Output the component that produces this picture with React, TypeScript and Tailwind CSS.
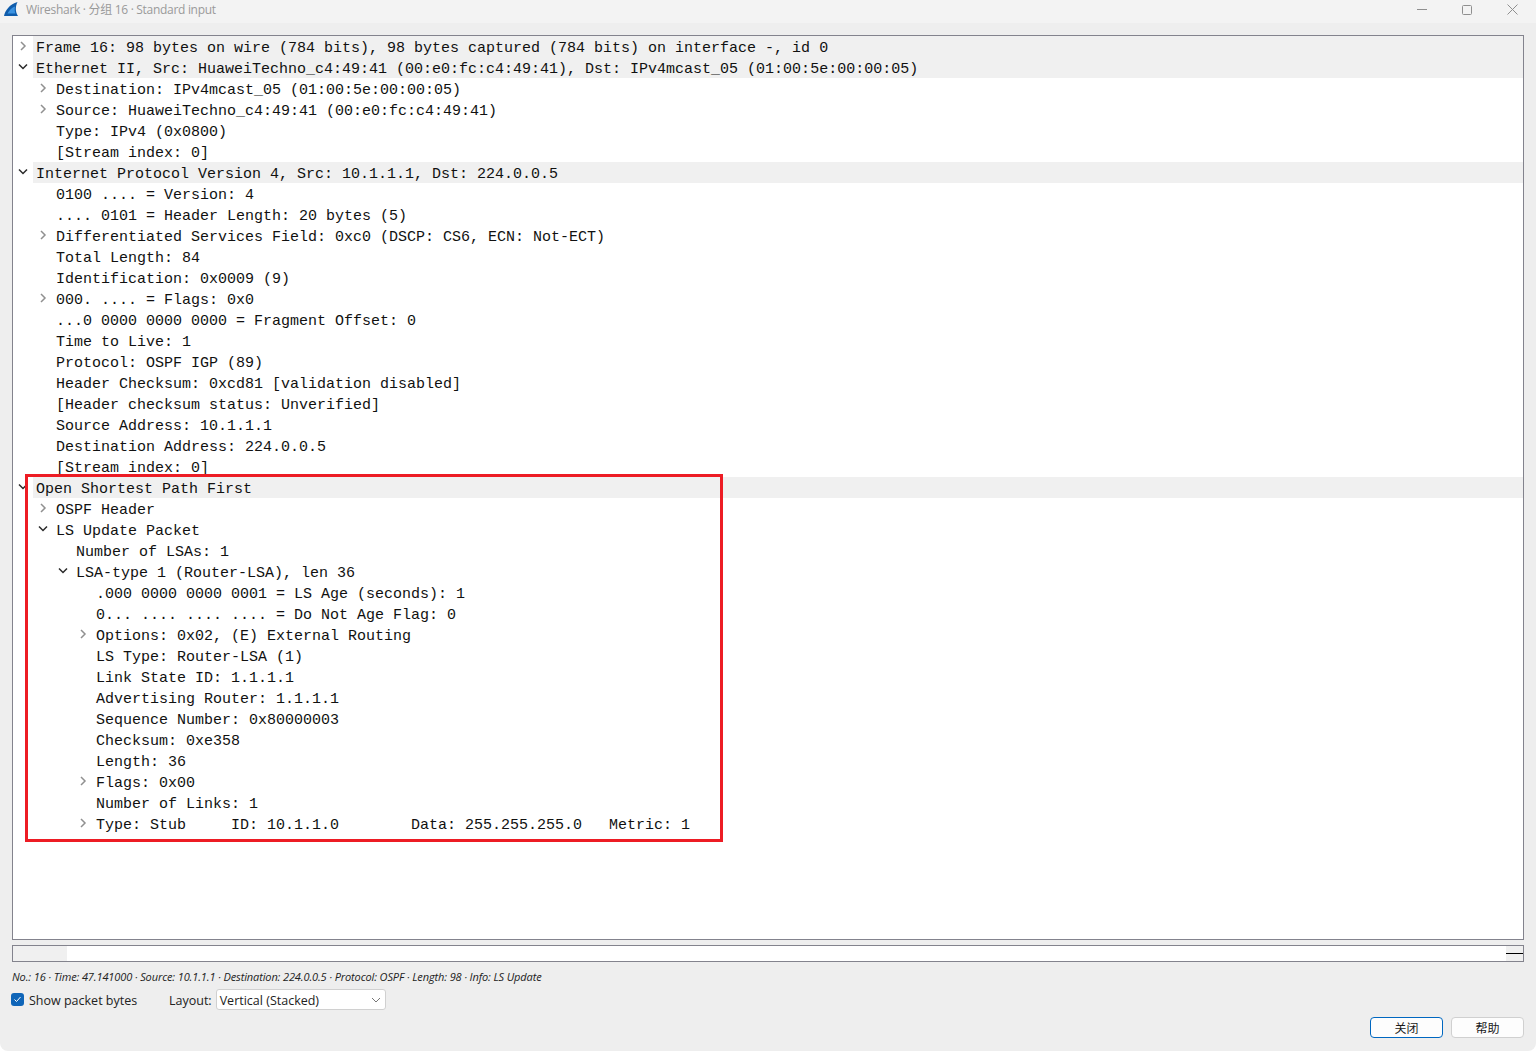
const rows: [number, "o" | "c" | null, string][] = [
  [0, "c", "Frame 16: 98 bytes on wire (784 bits), 98 bytes captured (784 bits) on interface -, id 0"],
  [0, "o", "Ethernet II, Src: HuaweiTechno_c4:49:41 (00:e0:fc:c4:49:41), Dst: IPv4mcast_05 (01:00:5e:00:00:05)"],
  [1, "c", "Destination: IPv4mcast_05 (01:00:5e:00:00:05)"],
  [1, "c", "Source: HuaweiTechno_c4:49:41 (00:e0:fc:c4:49:41)"],
  [1, null, "Type: IPv4 (0x0800)"],
  [1, null, "[Stream index: 0]"],
  [0, "o", "Internet Protocol Version 4, Src: 10.1.1.1, Dst: 224.0.0.5"],
  [1, null, "0100 .... = Version: 4"],
  [1, null, ".... 0101 = Header Length: 20 bytes (5)"],
  [1, "c", "Differentiated Services Field: 0xc0 (DSCP: CS6, ECN: Not-ECT)"],
  [1, null, "Total Length: 84"],
  [1, null, "Identification: 0x0009 (9)"],
  [1, "c", "000. .... = Flags: 0x0"],
  [1, null, "...0 0000 0000 0000 = Fragment Offset: 0"],
  [1, null, "Time to Live: 1"],
  [1, null, "Protocol: OSPF IGP (89)"],
  [1, null, "Header Checksum: 0xcd81 [validation disabled]"],
  [1, null, "[Header checksum status: Unverified]"],
  [1, null, "Source Address: 10.1.1.1"],
  [1, null, "Destination Address: 224.0.0.5"],
  [1, null, "[Stream index: 0]"],
  [0, "o", "Open Shortest Path First"],
  [1, "c", "OSPF Header"],
  [1, "o", "LS Update Packet"],
  [2, null, "Number of LSAs: 1"],
  [2, "o", "LSA-type 1 (Router-LSA), len 36"],
  [3, null, ".000 0000 0000 0001 = LS Age (seconds): 1"],
  [3, null, "0... .... .... .... = Do Not Age Flag: 0"],
  [3, "c", "Options: 0x02, (E) External Routing"],
  [3, null, "LS Type: Router-LSA (1)"],
  [3, null, "Link State ID: 1.1.1.1"],
  [3, null, "Advertising Router: 1.1.1.1"],
  [3, null, "Sequence Number: 0x80000003"],
  [3, null, "Checksum: 0xe358"],
  [3, null, "Length: 36"],
  [3, "c", "Flags: 0x00"],
  [3, null, "Number of Links: 1"],
  [3, "c", "Type: Stub     ID: 10.1.1.0        Data: 255.255.255.0   Metric: 1"],
];

const indent = ["pl-0", "pl-[20px]", "pl-[40px]", "pl-[60px]"];

function Chevron({ kind }: { kind: "o" | "c" | null }) {
  return (
    <span className="w-[20px] h-[21px] shrink-0 flex items-center justify-center pb-[2px]">
      {kind === "c" && (
        <svg width="8" height="10" viewBox="0 0 8 10" fill="none" stroke="#909090" strokeWidth="1.5">
          <path d="M2 1l4 4-4 4" />
        </svg>
      )}
      {kind === "o" && (
        <svg width="10" height="8" viewBox="0 0 10 8" fill="none" stroke="#2a2a2a" strokeWidth="1.5">
          <path d="M1 1.5l4 4 4-4" />
        </svg>
      )}
    </span>
  );
}

const ui = "font-['Open_Sans','Noto_Sans_CJK_SC',sans-serif]";

export default function App() {
  return (
    <div className={`relative h-[1051px] w-[1536px] overflow-hidden bg-[#eeeeee] rounded-b-[8px] flex flex-col ${ui}`}>
      <div className="h-[23px] bg-[#f3f3f3] flex items-center shrink-0">
        <svg className="ml-[4px] mr-[2px] mb-[5px]" width="14" height="14" viewBox="0 0 14 14">
          <path d="M0 14C1 8.5 6 2 13.5 0C11.5 4 11 9.5 14 14Z" fill="#0f5cab" />
          <path d="M3.5 11.5C5.5 8 8 5.5 11 4.5C10.5 7 10.6 9.5 11.5 11.5Z" fill="#3b93e2" />
        </svg>
        <span className="ml-[6px] text-[12px] leading-none text-[#9a9a9a] mb-[3px] tracking-[-0.3px]">Wireshark · 分组 16 · Standard input</span>
        <div className="ml-auto flex items-center mb-[4px]">
          <svg className="mr-[35px]" width="10" height="10" viewBox="0 0 10 10" stroke="#8f8f8f" fill="none"><path d="M0 4.5h10" /></svg>
          <svg className="mr-[35px]" width="10" height="10" viewBox="0 0 10 10" stroke="#8f8f8f" fill="none"><rect x="0.5" y="0.5" width="9" height="9" rx="1" /></svg>
          <svg className="mr-[18px]" width="11" height="11" viewBox="0 0 11 11" stroke="#8f8f8f" fill="none"><path d="M0.5 0.5l10 10M10.5 0.5l-10 10" /></svg>
        </div>
      </div>

      <div className="mt-[12px] mx-[12px] h-[905px] shrink-0 border border-[#83838d] bg-white overflow-hidden font-['Liberation_Mono',monospace] text-[15px] text-[#111111]">
        {rows.map(([lvl, kind, text], i) => (
          <div key={i} className={`h-[21px] flex items-center ${indent[lvl]}`}>
            <Chevron kind={kind} />
            <span className={`h-[21px] leading-[25px] whitespace-pre grow ${lvl === 0 ? "bg-[#f0f0f0] pl-[3px]" : "pl-[3px]"}`}>{text}</span>
          </div>
        ))}
      </div>

      <div className="mt-[5px] mx-[12px] h-[17px] shrink-0 border border-[#83838d] bg-white flex">
        <div className="w-[54px] bg-[#f0f0f0]" />
        <div className="grow" />
        <div className="w-[17px] bg-[#f0f0f0] flex items-center">
          <div className="h-px w-full bg-black" />
        </div>
      </div>

      <div className="mt-[9px] ml-[12px] h-[12px] flex items-center text-[11px] italic text-[#222222] tracking-[-0.12px] whitespace-pre">
        No.: 16 · Time: 47.141000 · Source: 10.1.1.1 · Destination: 224.0.0.5 · Protocol: OSPF · Length: 98 · Info: LS Update
      </div>

      <div className="mt-[6px] ml-[11px] h-[21px] flex items-center text-[12.5px] text-[#222222]">
        <span className="w-[13px] h-[13px] rounded-[3px] bg-[#0f65b8] flex items-center justify-center">
          <svg width="9" height="9" viewBox="0 0 9 9" fill="none" stroke="#ffffff" strokeWidth="1"><path d="M1.5 4.5l2 2 4-4.5" /></svg>
        </span>
        <span className="ml-[5px] w-[109px] pt-[3px] whitespace-nowrap">Show packet bytes</span>
        <span className="ml-[31px] pt-[3px]">Layout:</span>
        <div className="ml-[4px] w-[170px] h-[21px] rounded-[3px] border border-[#d0d0d0] bg-white flex items-center pl-[3px] pr-[3px] text-[12.5px]">
          <span className="pt-[3px]">Vertical (Stacked)</span>
          <svg className="ml-auto mr-[1px]" width="10" height="6" viewBox="0 0 10 6" fill="none" stroke="#777777"><path d="M1 1l4 4 4-4" /></svg>
        </div>
      </div>

      <div className="mt-[7px] mr-[12px] flex justify-end gap-[8px] text-[12px] text-[#1a1a1a]">
        <button className="w-[73px] h-[21px] rounded-[4px] border-[1.5px] border-[#0067c0] bg-[#fdfdfd] flex items-center justify-center leading-none pt-[2px]">关闭</button>
        <button className="w-[73px] h-[21px] rounded-[4px] border border-[#d0d0d0] bg-[#fdfdfd] flex items-center justify-center leading-none pt-[2px]">帮助</button>
      </div>

      <div className="absolute left-[25px] top-[474px] w-[698px] h-[368px] border-[3px] border-[#ed1c24] pointer-events-none" />
    </div>
  );
}
